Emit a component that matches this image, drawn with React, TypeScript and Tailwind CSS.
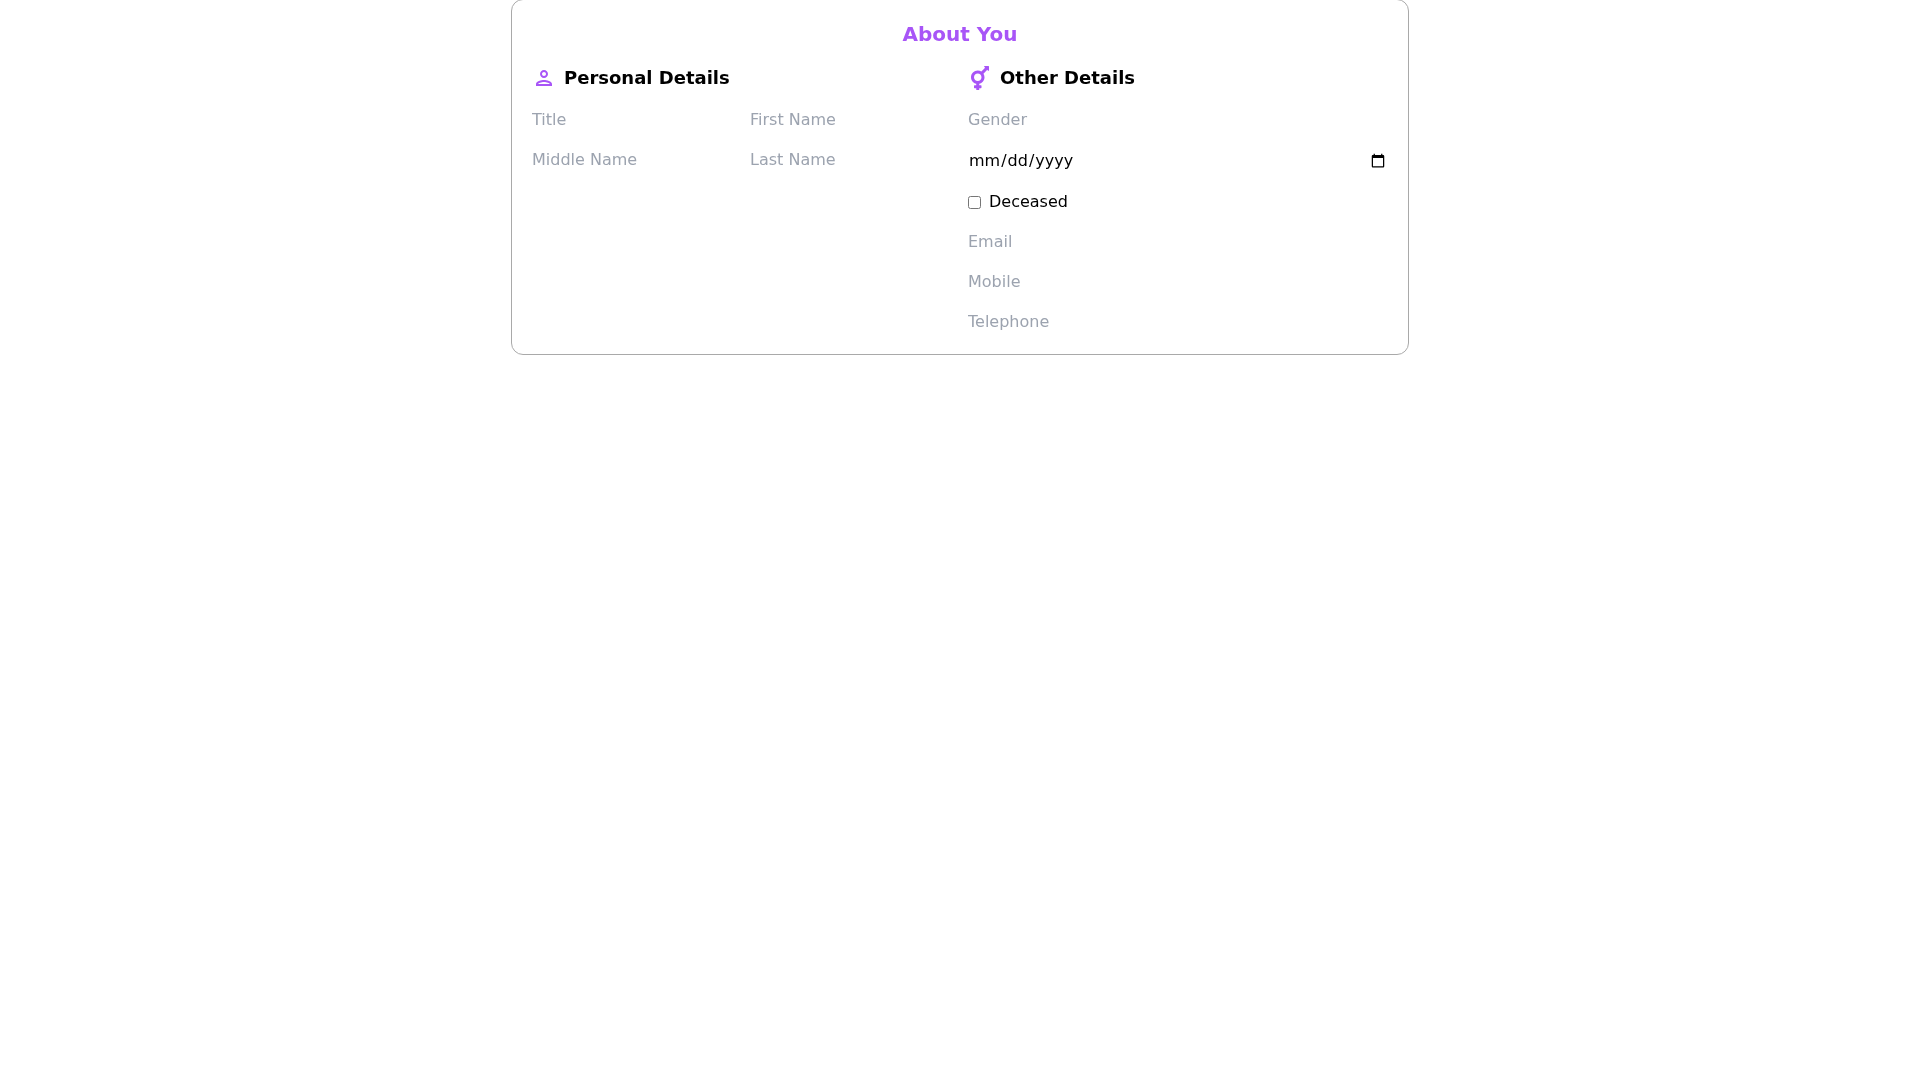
import { FaTransgender } from "react-icons/fa";
import { MdOutlinePerson } from "react-icons/md";

function TextInput({ placeholder }: { placeholder: string }) {
  return (
    <input
      type="text"
      placeholder={placeholder}
      className="block h-6 w-full min-w-0 bg-transparent outline-none placeholder:text-[#9ca3af]"
    />
  );
}

export default function App() {
  return (
    <div className="min-h-screen bg-white text-black font-['DejaVu_Sans',sans-serif]">
      <div className="mx-auto -mt-px w-[898px] transform-gpu rounded-xl border border-[#a9a9a9] px-5 pt-5 pb-5">
        <h1 className="text-center text-xl font-bold text-[#a855f7]">About You</h1>
        <div className="mt-4 grid grid-cols-2 gap-4">
          <section>
            <h2 className="flex h-7 items-center gap-2 text-lg font-bold">
              <MdOutlinePerson className="h-6 w-6 text-[#a855f7]" />
              Personal Details
            </h2>
            <div className="mt-4 grid grid-cols-2 gap-4">
              <TextInput placeholder="Title" />
              <TextInput placeholder="First Name" />
              <TextInput placeholder="Middle Name" />
              <TextInput placeholder="Last Name" />
            </div>
          </section>
          <section>
            <h2 className="flex h-7 items-center gap-2 text-lg font-bold">
              <FaTransgender className="h-6 w-6 text-[#a855f7]" />
              Other Details
            </h2>
            <div className="mt-4 flex flex-col gap-4">
              <TextInput placeholder="Gender" />
              <input type="date" className="block h-[26px] w-full bg-transparent outline-none" />
              <label className="flex h-6 items-center gap-2">
                <input type="checkbox" />
                Deceased
              </label>
              <TextInput placeholder="Email" />
              <TextInput placeholder="Mobile" />
              <TextInput placeholder="Telephone" />
            </div>
          </section>
        </div>
      </div>
    </div>
  );
}
